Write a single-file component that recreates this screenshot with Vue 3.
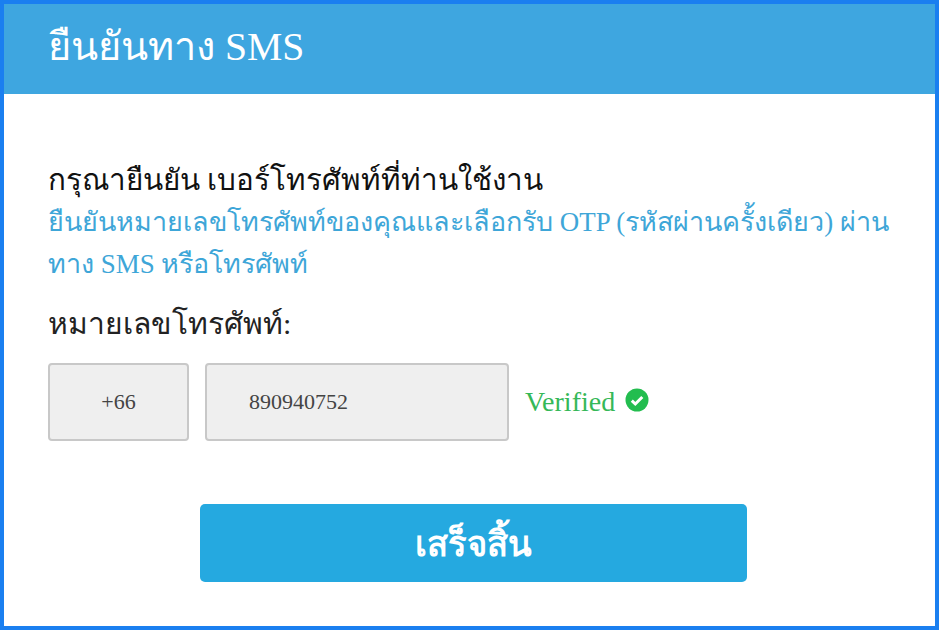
<script setup>
const countryCode = '+66'
const phoneNumber = '890940752'
</script>

<template>
  <div class="frame">
    <header class="title-bar">
      <h1>ยืนยันทาง SMS</h1>
    </header>
    <main class="content">
      <p class="lead">กรุณายืนยัน เบอร์โทรศัพท์ที่ท่านใช้งาน</p>
      <p class="hint">ยืนยันหมายเลขโทรศัพท์ของคุณและเลือกรับ OTP (รหัสผ่านครั้งเดียว) ผ่านทาง SMS หรือโทรศัพท์</p>
      <label class="phone-label">หมายเลขโทรศัพท์:</label>
      <div class="phone-row">
        <div class="field code">{{ countryCode }}</div>
        <div class="field number">{{ phoneNumber }}</div>
        <span class="verified">
          Verified
          <svg class="check" viewBox="0 0 24 24" width="24" height="24">
            <circle cx="12" cy="12" r="11.5" fill="#23bd4f" />
            <path d="M6.8 12.6l3.5 3.4 7-7" fill="none" stroke="#fff" stroke-width="3" />
          </svg>
        </span>
      </div>
      <div class="actions">
        <button class="done">เสร็จสิ้น</button>
      </div>
    </main>
  </div>
</template>

<style scoped>
.frame {
  box-sizing: border-box;
  width: 939px;
  height: 630px;
  border: 4px solid #1a7ff0;
  background: #fff;
  font-family: "Liberation Serif", "Noto Sans", "Noto Sans CJK SC", serif;
  overflow: hidden;
}

.title-bar {
  height: 90px;
  background: #3ea6e0;
  display: flex;
  align-items: center;
  padding: 0 44px 8px;
  box-sizing: border-box;
}

.title-bar h1 {
  margin: 0;
  color: #fff;
  font-size: 39.7px;
  font-weight: 400;
}

.content {
  padding: 65px 40px 0 44px;
}

.lead {
  margin: 0;
  font-size: 29.6px;
  line-height: 42px;
  color: #111;
}

.hint {
  margin: 0;
  font-size: 26.95px;
  line-height: 42px;
  color: #3ea6d8;
}

.phone-label {
  display: block;
  margin-top: 18px;
  font-size: 30px;
  line-height: 42px;
  color: #222;
}

.phone-row {
  display: flex;
  align-items: center;
  margin-top: 18px;
}

.field {
  box-sizing: border-box;
  height: 78px;
  background: #efefef;
  border: 2px solid #c8c8c8;
  border-radius: 4px;
  display: flex;
  align-items: center;
  font-size: 22px;
  color: #444;
}

.code {
  width: 141px;
  justify-content: center;
  margin-right: 16px;
}

.number {
  width: 304px;
  padding-left: 42px;
  margin-right: 16px;
}

.verified {
  display: flex;
  align-items: center;
  gap: 10px;
  font-size: 28px;
  color: #35b858;
}

.check {
  margin-top: -4px;
}

.actions {
  display: flex;
  justify-content: center;
  margin-top: 63px;
  padding-left: 4px;
}

.done {
  width: 547px;
  height: 78px;
  background: #25a9e0;
  border: none;
  border-radius: 5px;
  color: #fff;
  font-family: inherit;
  font-size: 34.5px;
  font-weight: 700;
}
</style>
